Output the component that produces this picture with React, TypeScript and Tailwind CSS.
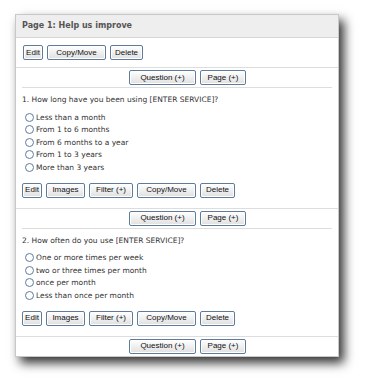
import React from 'react';

const Btn = ({ label, w }: { label: string; w: string }) => (
  <button
    className={`h-[15px] ${w} rounded-[2px] border border-[#5f7b9c] bg-gradient-to-b from-white to-[#e0e0e0] text-[8px] leading-none text-[#111] font-['Liberation_Sans',Arial,sans-serif] shadow-[inset_0_0_0_1px_#ffffff]`}
  >
    {label}
  </button>
);

const AddRow = ({ last }: { last?: boolean }) => (
  <div className={`mx-[6px] flex justify-center gap-[4px] pl-[21px] pt-[2px] pb-[2px] ${last ? '' : 'border-b border-[#dddddd]'}`}>
    <Btn label="Question (+)" w="w-[67px]" />
    <Btn label="Page (+)" w="w-[46px]" />
  </div>
);

const Question = ({ title, options }: { title: string; options: string[] }) => (
  <div className="border-b border-[#dddddd] px-[6px] pt-[6px] pb-[10px]">
    <p className="text-[7.5px] leading-[12px] text-[#333]">{title}</p>
    <ul className="mt-[5px]">
      {options.map((o) => (
        <li key={o} className="flex items-center h-[12.5px] pl-[3px] text-[7.5px] text-[#333]">
          <span className="w-[9px] h-[9px] rounded-full border border-[#5f7c9e] bg-white mr-[2px]" />
          {o}
        </li>
      ))}
    </ul>
    <div className="mt-[9px] flex gap-[4px]">
      <Btn label="Edit" w="w-[20px]" />
      <Btn label="Images" w="w-[39px]" />
      <Btn label="Filter (+)" w="w-[44px]" />
      <Btn label="Copy/Move" w="w-[59px]" />
      <Btn label="Delete" w="w-[35px]" />
    </div>
  </div>
);

export default function App() {
  return (
    <div className="w-[369px] h-[384px] bg-white pl-[15px] pt-[14px] font-['DejaVu_Sans',Verdana,sans-serif]">
      <div className="w-[324px] border border-[#c8c8c8] bg-white shadow-[5px_6px_10px_rgba(0,0,0,0.8)]">
        <div className="h-[23px] flex items-center bg-[#eeeeee] border-b border-[#d6d6d6] pl-[6px] text-[8px] font-bold text-[#555]">
          Page 1: Help us improve
        </div>
        <div className="flex gap-[4px] px-[7px] pt-[7px] pb-[7px] border-b border-[#dddddd]">
          <Btn label="Edit" w="w-[20px]" />
          <Btn label="Copy/Move" w="w-[59px]" />
          <Btn label="Delete" w="w-[33px]" />
        </div>
        <AddRow />
        <Question
          title="1. How long have you been using [ENTER SERVICE]?"
          options={['Less than a month', 'From 1 to 6 months', 'From 6 months to a year', 'From 1 to 3 years', 'More than 3 years']}
        />
        <AddRow />
        <Question
          title="2. How often do you use [ENTER SERVICE]?"
          options={['One or more times per week', 'two or three times per month', 'once per month', 'Less than once per month']}
        />
        <AddRow last />
      </div>
    </div>
  );
}
